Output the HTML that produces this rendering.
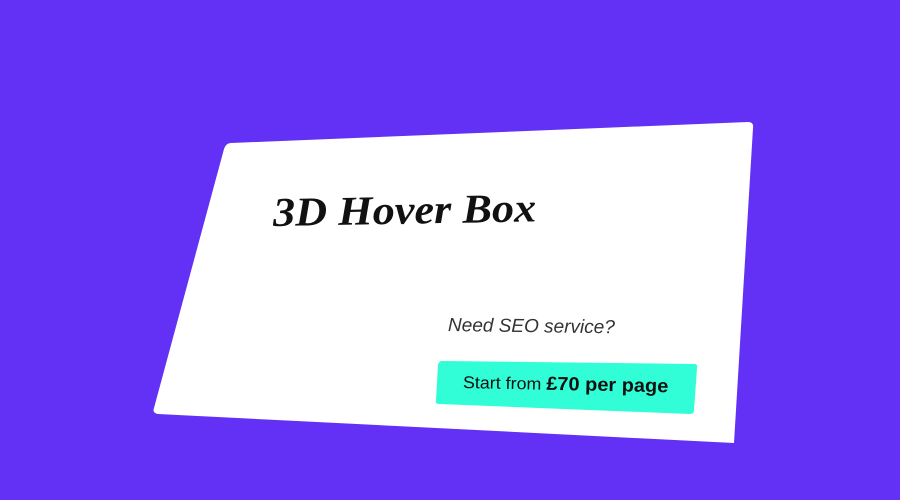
<!DOCTYPE html>
<html><head><meta charset="utf-8"><style>
html,body{margin:0;padding:0;width:900px;height:500px;overflow:hidden;background:#6331f5;}
svg{position:absolute;left:0;top:0}
.t{position:absolute;white-space:nowrap;transform-origin:left center}
</style></head><body>
<svg width="900" height="500">
<path d="M231,143 L748,122 Q754,122 753,128 L734,443 L158,414 Q152,413 154,408 L224,149 Q226,143 231,143Z" fill="#fff"/>
<path d="M442,361 L694,364 Q698,364 697,368 L694,410 Q694,414 690,414 L439,404 Q435,404 436,400 L438,365 Q439,361 442,361Z" fill="#31fdd6"/>
</svg>
<div class="t" style="left:273px;top:188px;font:italic bold 41px 'Liberation Serif',serif;color:#111;transform:rotate(-1deg) scaleX(1.08)">3D Hover Box</div>
<div class="t" style="left:448px;top:315px;font:italic 19px 'Liberation Sans',sans-serif;color:#333;transform:rotate(0.8deg)">Need SEO service?</div>
<div class="t" style="left:463px;top:372px;font:17px 'Liberation Sans',sans-serif;color:#111;transform:rotate(1.2deg) scaleX(1.05)">Start from <b style="font-size:19px">£70 per page</b></div>
</body></html>
